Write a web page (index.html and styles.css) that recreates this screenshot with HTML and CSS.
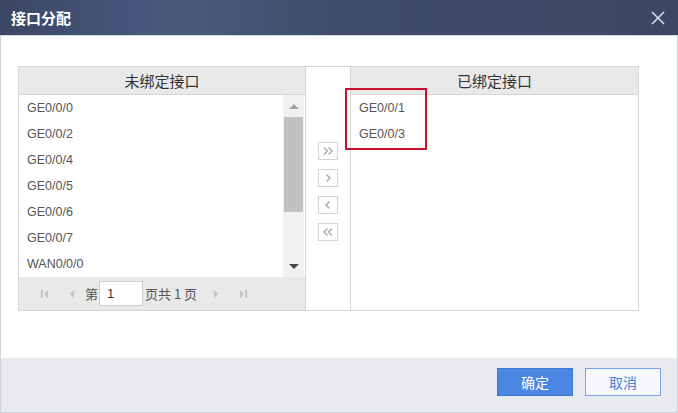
FILE: index.html
```html
<!DOCTYPE html>
<html>
<head>
<meta charset="utf-8">
<link rel="stylesheet" href="styles.css">
</head>
<body>
<div class="dialog">
  <div class="titlebar">
    <span class="title">接口分配</span>
    <svg class="close" width="14" height="14" viewBox="0 0 14 14"><path d="M1 1L13 13M13 1L1 13" stroke="#d9dde6" stroke-width="1.6" fill="none"/></svg>
  </div>
  <div class="content">
    <div class="panel">
      <div class="list left">
        <div class="head">未绑定接口</div>
        <div class="rows-wrap">
          <div class="rows">
            <div class="row">GE0/0/0</div>
            <div class="row">GE0/0/2</div>
            <div class="row">GE0/0/4</div>
            <div class="row">GE0/0/5</div>
            <div class="row">GE0/0/6</div>
            <div class="row">GE0/0/7</div>
            <div class="row">WAN0/0/0</div>
          </div>
          <div class="scrollbar">
            <div class="arrow-btn"><span class="tri-up"></span></div>
            <div class="thumb"></div>
            <div class="track"></div>
            <div class="arrow-btn"><span class="tri-down"></span></div>
          </div>
        </div>
        <div class="pager">
          <svg class="pg-ico" width="8" height="10" viewBox="0 0 8 10"><rect x="0" y="1" width="2" height="8" fill="#c4c4c4"/><path d="M7 1L3 5L7 9Z" fill="#c4c4c4"/></svg>
          <svg class="pg-ico prev" width="6" height="10" viewBox="0 0 6 10"><path d="M5 1L1 5L5 9Z" fill="#c4c4c4"/></svg>
          <span class="pg-text first">第</span>
          <span class="pg-input">1</span>
          <span class="pg-text">页共 1 页</span>
          <svg class="pg-ico next" width="6" height="10" viewBox="0 0 6 10"><path d="M1 1L5 5L1 9Z" fill="#c4c4c4"/></svg>
          <svg class="pg-ico last" width="8" height="10" viewBox="0 0 8 10"><path d="M1 1L5 5L1 9Z" fill="#c4c4c4"/><rect x="6" y="1" width="2" height="8" fill="#c4c4c4"/></svg>
        </div>
      </div>
      <div class="mid">
        <div class="mv"><svg width="18" height="16" viewBox="0 0 18 16"><path d="M5 4.5L8.5 8L5 11.5M9.5 4.5L13 8L9.5 11.5" stroke="#a8a8a8" stroke-width="1.4" fill="none"/></svg></div>
        <div class="mv"><svg width="18" height="16" viewBox="0 0 18 16"><path d="M7.5 4.5L11 8L7.5 11.5" stroke="#a8a8a8" stroke-width="1.4" fill="none"/></svg></div>
        <div class="mv"><svg width="18" height="16" viewBox="0 0 18 16"><path d="M10.5 4.5L7 8L10.5 11.5" stroke="#a8a8a8" stroke-width="1.4" fill="none"/></svg></div>
        <div class="mv"><svg width="18" height="16" viewBox="0 0 18 16"><path d="M8.5 4.5L5 8L8.5 11.5M13 4.5L9.5 8L13 11.5" stroke="#a8a8a8" stroke-width="1.4" fill="none"/></svg></div>
      </div>
      <div class="list right">
        <div class="head">已绑定接口</div>
        <div class="rows">
          <div class="row">GE0/0/1</div>
          <div class="row">GE0/0/3</div>
        </div>
        <div class="highlight"></div>
      </div>
    </div>
  </div>
  <div class="footer">
    <button class="btn primary">确定</button>
    <button class="btn secondary">取消</button>
  </div>
</div>
</body>
</html>
```

FILE: styles.css
```css
* { box-sizing: border-box; }
html, body { margin: 0; padding: 0; }
body {
  width: 678px;
  height: 413px;
  background: #fff;
  font-family: "Liberation Sans", Arial, "Noto Sans CJK SC", sans-serif;
  overflow: hidden;
}
.dialog {
  width: 678px;
  height: 413px;
  border: 1px solid #cfd2d8;
  border-top: none;
  display: flex;
  flex-direction: column;
}
.titlebar {
  height: 36px;
  flex: none;
  margin: 0 -1px;
  background: linear-gradient(90deg, #3b4762 0%, #45547a 18%, #4a5a7d 27%, #3f4c6a 50%, #3c4863 100%);
  border-bottom: 1px solid #d4d7de;
  display: flex;
  align-items: center;
  justify-content: space-between;
  padding: 0 13px 0 11px;
}
.title {
  color: #fff;
  font-weight: bold;
  font-size: 15px;
  font-family: "Noto Sans CJK SC", sans-serif;
}
.close { display: block; }
.content {
  flex: 1;
  padding: 30px 0 0 17px;
}
.panel {
  width: 621px;
  height: 245px;
  border: 1px solid #d6d6d6;
  display: flex;
}
.list { display: flex; flex-direction: column; position: relative; }
.list.left { width: 286px; }
.list.right { flex: 1; }
.head {
  height: 28px;
  flex: none;
  background: #e9e9e9;
  border-bottom: 1px solid #d6d6d6;
  text-align: center;
  font-family: "Noto Sans CJK SC", sans-serif;
  font-size: 15px;
  line-height: 27px;
  color: #333;
}
.rows-wrap {
  height: 182px;
  display: flex;
}
.rows { flex: 1; }
.row {
  height: 26px;
  line-height: 26px;
  padding-left: 8px;
  font-size: 12.5px;
  color: #555;
}
.scrollbar {
  width: 21px;
  margin-right: 1px;
  background: #f1f1f1;
  display: flex;
  flex-direction: column;
}
.arrow-btn {
  height: 22px;
  display: flex;
  align-items: center;
  justify-content: center;
  flex: none;
}
.tri-up {
  width: 0; height: 0;
  border-left: 5px solid transparent;
  border-right: 5px solid transparent;
  border-bottom: 5px solid #a3a3a3;
}
.tri-down {
  width: 0; height: 0;
  border-left: 5px solid transparent;
  border-right: 5px solid transparent;
  border-top: 5px solid #4a4a4a;
}
.thumb {
  height: 95px;
  margin: 0 1px;
  background: #c1c1c1;
  flex: none;
}
.track { flex: 1; }
.pager {
  flex: 1;
  background: #e9e9e9;
  display: flex;
  align-items: center;
  padding-left: 22px;
  font-family: "Noto Sans CJK SC", sans-serif;
  font-size: 13px;
  color: #555;
}
.pg-ico { display: block; }
.pg-ico.prev { margin-left: 20px; }
.pg-text.first { margin-left: 10px; }
.pg-input {
  width: 44px;
  height: 25px;
  background: #fff;
  border: 1px solid #d0d0d0;
  margin-left: 1px;
  padding-left: 7px;
  line-height: 23px;
  font-family: "Liberation Sans", Arial, sans-serif;
  font-size: 13px;
  color: #333;
}
.pg-input + .pg-text { margin-left: 2px; }
.pg-ico.next { margin-left: 16px; }
.pg-ico.last { margin-left: 20px; }
.mid {
  width: 46px;
  border-left: 1px solid #d6d6d6;
  border-right: 1px solid #d6d6d6;
  background: #fff;
  display: flex;
  flex-direction: column;
  align-items: center;
  padding-top: 75px;
  gap: 9px;
}
.mv {
  width: 20px;
  height: 18px;
  border: 1px solid #d3d3d3;
}
.mv svg { display: block; }
.highlight {
  position: absolute;
  left: -6px;
  top: 21px;
  width: 82px;
  height: 62px;
  border: 2px solid #c8102e;
}
.footer {
  height: 54px;
  flex: none;
  background: #e8eaed;
  display: flex;
  justify-content: flex-end;
  align-items: flex-start;
  padding: 10px 16px 0 0;
  gap: 12px;
}
.btn {
  width: 76px;
  height: 28px;
  font-family: "Noto Sans CJK SC", sans-serif;
  font-size: 14px;
  padding: 0;
  margin: 0;
}
.btn.primary {
  background: #4a86e2;
  border: 1px solid #3d78d6;
  color: #fff;
}
.btn.secondary {
  background: #f5f7fb;
  border: 1px solid #7ba3e6;
  color: #4a7fd4;
}
```
